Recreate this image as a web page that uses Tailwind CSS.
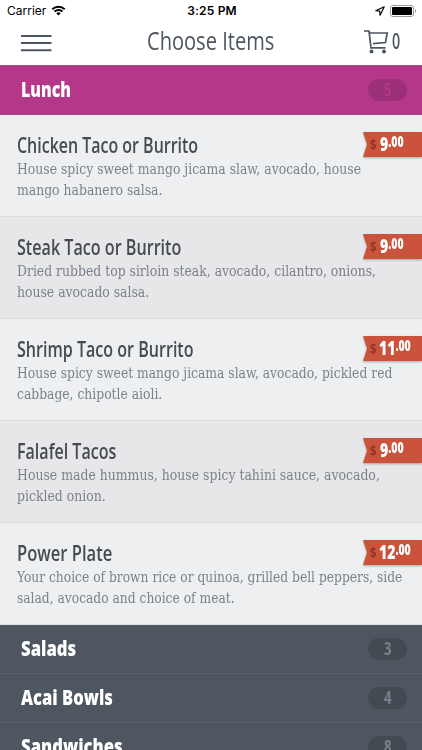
<!DOCTYPE html>
<html lang="en">
<head>
  <meta charset="UTF-8" />
  <meta name="viewport" content="width=device-width, initial-scale=1.0"/>
  <title>Choose Items</title>
  <!-- Tailwind CSS -->
  <script src="https://cdn.jsdelivr.net/npm/@tailwindcss/browser@4"></script>
</head>
<body class="h-[750px] overflow-hidden bg-white font-['Open_Sans',sans-serif] text-[#4d5660]">
  <!-- Status bar -->
  <div class="grid h-[21px] grid-cols-3 items-center pl-[7px] pr-[5px] font-['Inter',sans-serif] text-[12px] leading-[21px] text-black">
    <div class="flex items-center gap-[5px]">
      <span>Carrier</span>
      <svg class="h-[11px] w-[15px]" viewBox="0 0 14 11" fill="none" stroke="#000" stroke-width="2">
        <path d="M.8 4.2a8.800 8.800 0 0 1 12.400 0M3 6.600a5.700 5.700 0 0 1 8 0"/>
        <path d="M7 10.500 4.800 8.300a3.200 3.200 0 0 1 4.400 0Z" fill="#000" stroke="none"/>
      </svg>
    </div>
    <div class="text-center font-semibold tracking-[.2px]">3:25 PM</div>
    <div class="flex items-center justify-end gap-[5px]">
      <svg class="h-[10px] w-[10px]" viewBox="0 0 10 10" fill="none" stroke="#000" stroke-width="1.200" stroke-linejoin="round">
        <path d="M9.200.8.8 4.700l3.900.5.4 4Z"/>
      </svg>
      <svg class="h-[12px] w-[27px]" viewBox="0 0 27 12">
        <rect x=".5" y=".5" width="23" height="11" rx="2.5" fill="#fff" stroke="#999"/>
        <rect x="2" y="2" width="20" height="8" rx="1" fill="#000"/>
        <path d="M25 4v4c1.600-.6 1.600-3.400 0-4Z" fill="#999"/>
      </svg>
    </div>
  </div>

  <!-- Header -->
  <header class="flex h-[44px] items-start pl-[21px]">
    <svg class="mt-[13px] h-[18px] w-[31px] shrink-0" viewBox="0 0 31 18" stroke="#4d5660" stroke-width="2">
      <path d="M0 2h30.500M0 9h30.500M0 16.200h30.500"/>
    </svg>
    <h1 class="ml-[95px] w-[180px] shrink-0 origin-left scale-x-[.772] whitespace-nowrap text-[26px] leading-[38px]">Choose Items</h1>
    <svg class="ml-[37px] mt-[8px] h-[25px] w-[25px] shrink-0" viewBox="0 0 25 25" fill="none" stroke="#4d5660" stroke-width="1.700">
      <path d="M0 2h5l2 16.800h14.500M5.500 4h17.700l-1.700 9.500-12.500 1.200"/>
      <circle cx="7.500" cy="22.500" r="2" fill="#4d5660" stroke="none"/>
      <circle cx="20" cy="22.500" r="2" fill="#4d5660" stroke="none"/>
    </svg>
    <span class="ml-[3px] origin-left scale-x-[.65] text-[22px] font-semibold leading-[39px]">0</span>
  </header>

  <!-- Open category -->
  <section class="flex h-[50px] items-center justify-between border-y border-[#9a5087] bg-[#b4378a] pl-[21px] pr-[15px] text-white">
    <h2 class="origin-left scale-x-[.76] text-[21px] font-extrabold">Lunch</h2>
    <span class="flex h-[22px] w-[39px] items-center justify-center rounded-full bg-[#9b3078] text-[#b4378a]"><b class="scale-x-[.78] text-[17px]">5</b></span>
  </section>

  <!-- Items -->
  <main id="items"></main>

  <!-- Closed categories -->
  <nav id="categories"></nav>

  <script>
    // name, condensing of the name, description lines, condensing of the lines, dollars
    const items = [
      ['Chicken Taco or Burrito', .76, ['House spicy sweet mango jicama slaw, avocado, house', 'mango habanero salsa.'], .986, 9],
      ['Steak Taco or Burrito', .768, ['Dried rubbed top sirloin steak, avocado, cilantro, onions,', 'house avocado salsa.'], .986, 9],
      ['Shrimp Taco or Burrito', .765, ['House spicy sweet mango jicama slaw, avocado, pickled red', 'cabbage, chipotle aioli.'], .98, 11],
      ['Falafel Tacos', .764, ['House made hummus, house spicy tahini sauce, avocado,', 'pickled onion.'], .99, 9],
      ['Power Plate', .788, ['Your choice of brown rice or quinoa, grilled bell peppers, side', 'salad, avocado and choice of meat.'], .975, 12]
    ];

    document.getElementById('items').innerHTML = items.map(([name, fit, lines, linesFit, price]) => `
      <article class="relative h-[102px] border-b border-[#dcdddf] bg-[#eeeff1] pl-[17px] pt-[16px] even:bg-[#e7e7e9]">
        <h3 class="block w-max origin-left whitespace-nowrap text-[21px] font-semibold leading-[28px] text-[#454b52]" style="transform: scaleX(${fit})">${name}</h3>
        <p class="w-max origin-left whitespace-nowrap font-['DejaVu_Serif_Condensed','DejaVu_Serif',serif] text-[14px] leading-[20.500px] text-[#7a828d]" style="transform: scaleX(${linesFit})">${lines.join('<br>')}</p>
        <div class="absolute right-0 top-[17px] h-[25px] w-[59px] drop-shadow-[0_1px_1px_rgba(0,0,0,.3)]">
          <div class="flex h-full items-start bg-[#cb533b] pl-[7px] font-bold text-white [clip-path:polygon(0_0,100%_0,100%_100%,0_100%,4px_50%)]">
            <span class="w-[10px] origin-left scale-x-[.75] text-[15px] leading-[25px] text-[#8f3527]">$</span>
            <span class="flex origin-left scale-x-[.7] items-start font-extrabold"><span class="text-[20px] leading-[24px]">${price}</span><span class="text-[15px] leading-[19px]">.00</span></span>
          </div>
        </div>
      </article>`).join('');

    // name, condensing of the name, number of items
    const categories = [['Salads', .795, 3], ['Acai Bowls', .79, 4], ['Sandwiches', .795, 8]];

    document.getElementById('categories').innerHTML = categories.map(([name, fit, count]) => `
      <div class="flex h-[49px] items-center justify-between border-b border-[#59616b] bg-[#4e565f] pl-[21px] pr-[15px]">
        <h2 class="origin-left whitespace-nowrap text-[21px] font-extrabold text-white" style="transform: scaleX(${fit})">${name}</h2>
        <span class="flex h-[22px] w-[39px] items-center justify-center rounded-full bg-[#434a52] text-[#77818c]"><b class="scale-x-[.78] text-[17px]">${count}</b></span>
      </div>`).join('');
  </script>
</body>
</html>
